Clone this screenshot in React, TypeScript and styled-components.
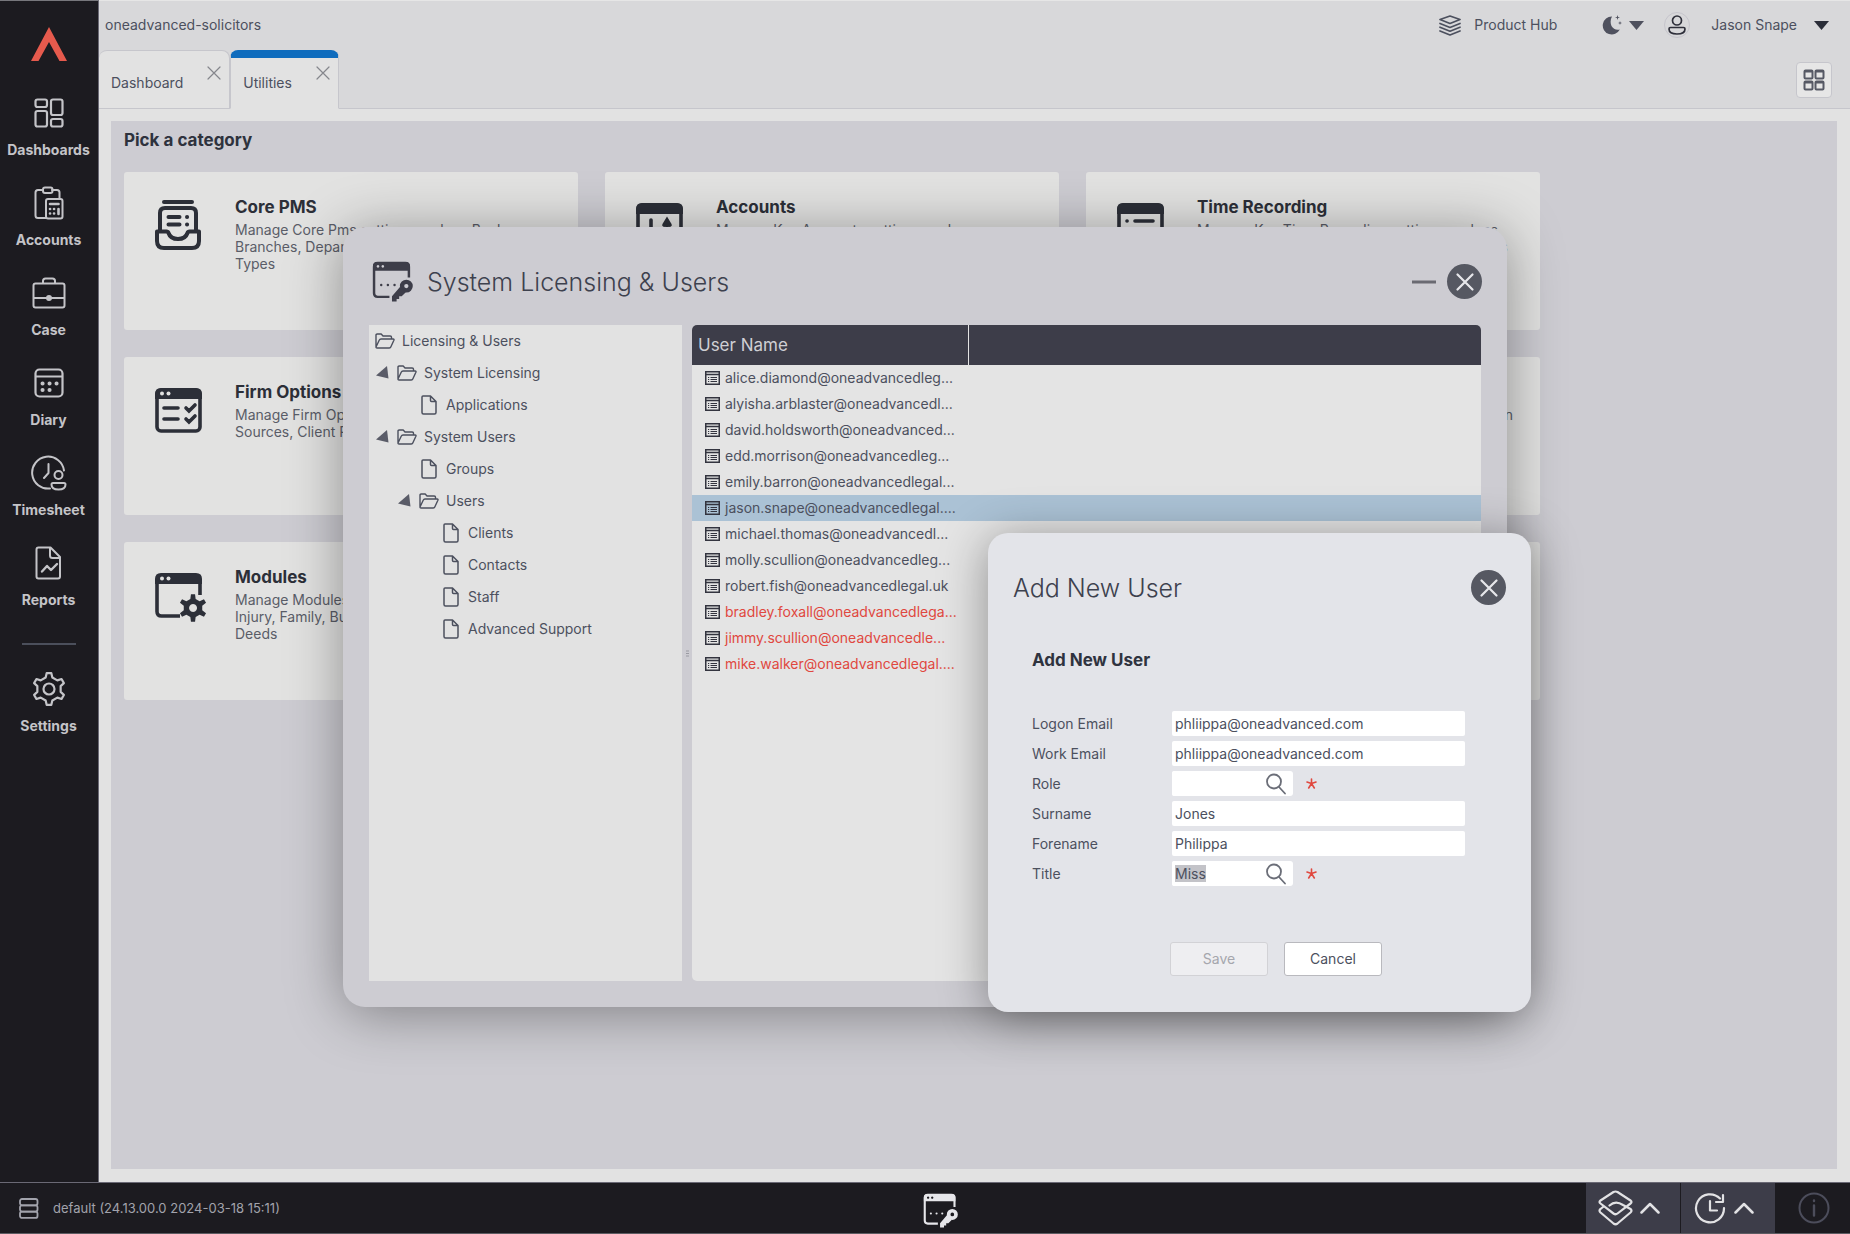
import React, { useEffect, useRef } from 'react';
import styled, { createGlobalStyle } from 'styled-components';

const Global = createGlobalStyle`
  * { box-sizing: border-box; }
  body { margin: 0; background: #1c1b20; }
  body, button, input { font-family: Inter, "Liberation Sans", sans-serif; }
  button { border: 0; padding: 0; background: none; color: inherit; cursor: pointer; }
  h1, h2, h3, p, ul { margin: 0; padding: 0; }
  svg { display: block; flex: none; }
`;

const Shell = styled.div`
  position: relative;
  display: grid;
  grid-template-columns: 99px minmax(0, 1fr);
  grid-template-rows: minmax(0, 1fr) 52px;
  min-height: 100vh;
  color: #4c505e;
  font-size: 14px;
  line-height: 18px;
`;

/* ---------- sidebar ---------- */
const Sidebar = styled.nav`
  display: flex;
  flex-direction: column;
  align-items: center;
  padding: 26px 1px 0 0;
  background: #1c1b20;
  border-top: 1px solid #77777c;
  border-right: 1px solid #6a6975;
  color: #c4c4c8;
`;
const Logo = styled.div`
  height: 56px;
`;
const NavItem = styled.button`
  display: flex;
  flex-direction: column;
  align-items: center;
  justify-content: flex-end;
  gap: 10px;
  width: 100%;
  height: 90px;
  padding-bottom: 14px;
  font-size: 14px;
  line-height: 18px;
  font-weight: 700;
`;
const NavIcon = styled.span`
  display: flex;
  align-items: center;
  height: 36px;
`;
const NavStack = styled.div`
  width: 100%;
`;
const NavRule = styled.hr`
  width: 54px;
  margin: 20px 0 14px;
  border: 0;
  border-top: 2px solid #4b4f5b;
`;

/* ---------- header ---------- */
const Main = styled.div`
  display: flex;
  flex-direction: column;
  min-width: 0;
  background: #e2e2e2;
`;
const Header = styled.header`
  background: #d8d8da;
  border-top: 1px solid #e6e6e6;
`;
const TopBar = styled.div`
  display: flex;
  align-items: center;
  height: 48px;
  padding: 0 21px 0 6px;
`;
const Tenant = styled.span`
  flex: 1;
`;
const TopButton = styled.button<{ $gap: number; $after: number }>`
  display: flex;
  align-items: center;
  gap: ${p => p.$gap}px;
  margin-right: ${p => p.$after}px;
  font-size: 14px;
  line-height: 18px;
`;
const Avatar = styled.span`
  display: grid;
  place-items: center;
  width: 26px;
  height: 26px;
  margin-right: 4px;
  border: 1px solid #c6c5cc;
  border-radius: 50%;
  color: #2e2f3a;
`;
const TabBar = styled.div`
  display: flex;
  align-items: flex-end;
  height: 60px;
  border-bottom: 1px solid #c6c6cc;
  padding-right: 18px;
`;
const Tab = styled.div<{ $active?: boolean }>`
  display: flex;
  gap: 23px;
  height: 59px;
  margin-bottom: -1px;
  padding: ${p => (p.$active ? 7 : 14)}px 7px 0 12px;
  background: #e2e2e2;
  border: 1px solid #c6c6cc;
  border-left-width: ${p => (p.$active ? 1 : 0)}px;
  border-top: ${p => (p.$active ? '8px solid #0f6cbd' : '1px solid #c6c6cc')};
  border-bottom-color: ${p => (p.$active ? '#e2e2e2' : '#c6c6cc')};
  border-radius: 8px 8px 0 0;
`;
const TabLabel = styled.button`
  align-self: flex-start;
  margin-top: 9px;
  font-size: 14px;
  line-height: 18px;
`;
const TabClose = styled.button`
  align-self: flex-start;
  color: #85868c;
`;
const GridButton = styled.button`
  display: grid;
  place-items: center;
  width: 36px;
  height: 36px;
  margin: 0 0 10px auto;
  background: #e6e6e6;
  border: 1px solid #c6c6cc;
  border-radius: 4px;
  color: #565965;
`;

/* ---------- categories ---------- */
const Panel = styled.main`
  flex: 1;
  margin: 12px 13px 13px 12px;
  padding: 9px 13px;
  background: #cdccd2;
`;
const PanelTitle = styled.h1`
  color: #2e323d;
  font-size: 17px;
  line-height: 20px;
  font-weight: 700;
`;
const Cards = styled.div`
  display: grid;
  grid-template-columns: repeat(auto-fill, 454px);
  gap: 27px;
  margin-top: 22px;
`;
const Card = styled.section`
  display: grid;
  grid-template-columns: 80px minmax(0, 1fr);
  align-content: start;
  height: 158px;
  padding: 25px 24px 0 31px;
  background: #e2e2e1;
  border-radius: 3px;
  color: #2c2f38;
`;
const CardIcon = styled.div`
  padding-top: 3px;
`;
const CardTitle = styled.h2`
  font-size: 17px;
  line-height: 20px;
  font-weight: 700;
`;
const CardText = styled.p`
  margin-top: 4px;
  color: #5a5d68;
  font-size: 14px;
  line-height: 17px;
  white-space: pre;
`;

/* ---------- windows ---------- */
const Window = styled.div`
  position: absolute;
  top: 50%;
  left: 50%;
  transform: translate(-50%, -50%);
  display: flex;
  flex-direction: column;
  width: 1164px;
  height: 780px;
  padding: 0 26px 26px;
  background: #cdccd2;
  border-radius: 22px;
  box-shadow: 0 6px 56px rgba(0, 0, 0, 0.38);
`;
const WindowHeader = styled.div`
  display: flex;
  align-items: center;
  height: 98px;
  padding: 11px 0 0 3px;
  color: #3d3d49;
`;
const WindowTitle = styled.h2`
  flex: 1;
  margin-left: 14px;
  color: #3d414e;
  font-size: 25px;
  line-height: 32px;
  font-weight: 300;
`;
const Minimise = styled.button`
  width: 24px;
  height: 24px;
  margin-right: 11px;
  color: #6a6a72;
`;
const RoundClose = styled.button`
  display: grid;
  place-items: center;
  width: 35px;
  height: 35px;
  margin-right: -1px;
  border-radius: 50%;
  background: #565862;
  color: #e6e6ea;
`;
const Split = styled.div`
  flex: 1;
  display: grid;
  grid-template-columns: 313px 10px minmax(0, 1fr);
`;
const Tree = styled.ul`
  list-style: none;
  background: #e2e2e2;
`;
const TreeRow = styled.li<{ $level: number }>`
  display: flex;
  align-items: center;
  height: 32px;
  padding-left: ${p => 6 + Math.max(0, p.$level - 1) * 22}px;
`;
const TreeArrow = styled.button`
  width: 22px;
  height: 20px;
  color: #5a5c68;
`;
const ArrowGap = styled.span`
  width: 22px;
`;
const TreeLink = styled.button`
  display: flex;
  align-items: center;
  gap: 7px;
  font-size: 14px;
  line-height: 18px;
`;
const Grip = styled.div`
  display: grid;
  place-items: center;
  color: #9a9aa2;
`;
const Users = styled.div`
  background: #e4e4e4;
  border-radius: 5px;
  overflow: hidden;
`;
const UserTable = styled.table`
  width: 100%;
  border-collapse: collapse;
  table-layout: fixed;
`;
const Th = styled.th`
  height: 40px;
  padding: 0 6px;
  background: #3d3d49;
  color: #cfcfd4;
  font-size: 17px;
  line-height: 20px;
  font-weight: 400;
  text-align: left;
  &:first-child { width: 276px; border-right: 1px solid #e4e4e4; }
`;
const UserRow = styled.tr<{ $selected?: boolean; $inactive?: boolean }>`
  height: 26px;
  background: ${p => (p.$selected ? '#abc2d5' : 'transparent')};
  color: ${p => (p.$inactive ? '#e0483f' : '#4c505e')};
`;
const UserCell = styled.td`
  padding: 0 0 0 13px;
  font-size: 14px;
  line-height: 18px;
`;
const UserName = styled.span`
  display: flex;
  align-items: center;
  gap: 5px;
  white-space: nowrap;
`;
const RowIcon = styled.span`
  color: #33343f;
`;

/* ---------- add user dialog ---------- */
const Dialog = styled.section`
  position: absolute;
  top: 306px;
  left: 645px;
  width: 543px;
  padding: 37px 26px 36px 25px;
  background: #e3e4e9;
  border-radius: 20px;
  box-shadow: 0 6px 48px rgba(0, 0, 0, 0.38);
`;
const DialogHeader = styled.div`
  display: flex;
  align-items: center;
  & > h2 { margin-left: 0; }
`;
const Form = styled.form`
  padding: 45px 40px 0 19px;
`;
const FormTitle = styled.h3`
  color: #2f333f;
  font-size: 17px;
  line-height: 20px;
  font-weight: 700;
`;
const Fields = styled.div`
  display: grid;
  gap: 5px;
  margin-top: 41px;
`;
const Field = styled.div`
  display: grid;
  grid-template-columns: 140px minmax(0, 1fr);
  align-items: center;
  height: 25px;
`;
const TextBox = styled.input`
  width: 100%;
  height: 25px;
  padding: 0 3px;
  border: 0;
  border-radius: 2px;
  outline: 0;
  background: #fff;
  color: #4c505e;
  font-size: 14px;
  line-height: 18px;
  &::selection { background: #c3c3c8; color: #4c505e; }
`;
const Lookup = styled.div`
  display: flex;
  align-items: center;
`;
const LookupBox = styled.div`
  display: flex;
  align-items: center;
  width: 121px;
  margin-right: 13px;
  padding-right: 6px;
  background: #fff;
  border-radius: 3px;
  color: #6b6e78;
`;
const Required = styled.span`
  display: block;
  color: #e0483f;
`;
const Actions = styled.div`
  display: flex;
  gap: 16px;
  margin: 56px 0 0 138px;
`;
const Action = styled.button`
  width: 98px;
  height: 34px;
  background: #fff;
  border: 1px solid #b9b9be;
  border-radius: 3px;
  font-size: 14px;
  line-height: 18px;
  &:disabled { background: #eeeef1; border-color: #d2d2d6; color: #a5a6ad; }
`;

/* ---------- status bar ---------- */
const StatusBar = styled.footer`
  grid-column: 1 / -1;
  display: grid;
  grid-template-columns: 1fr auto 1fr;
  align-items: center;
  background: #1c1b20;
  border-top: 1px solid #6a6975;
  border-bottom: 1px solid #5c5c62;
  color: #a2a3ac;
  font-size: 13px;
`;
const Build = styled.div`
  display: flex;
  align-items: center;
  gap: 14px;
  padding-left: 19px;
`;
const StatusIcon = styled.button`
  margin-left: 30px;
  padding-top: 4px;
  color: #e6e6ea;
`;
const StatusGroup = styled.div`
  display: flex;
  align-items: stretch;
  justify-content: flex-end;
  height: 50px;
  color: #e2e2e4;
`;
const StatusButton = styled.button`
  display: flex;
  align-items: center;
  gap: 7px;
  width: 94px;
  margin-right: 1px;
  padding-left: 12px;
  background: #3d3d49;
`;
const InfoButton = styled.button`
  display: grid;
  place-items: center;
  width: 74px;
  padding-left: 2px;
  color: #4c4d5b;
`;

/* ---------- icons ---------- */
type IconProps = { w: number; h: number; box?: string; sw?: number; children: React.ReactNode };
const Icon = ({ w, h, box, sw = 2, children }: IconProps) => (
  <svg width={w} height={h} viewBox={box ?? `0 0 ${w} ${h}`} fill="none" stroke="currentColor"
    strokeWidth={sw} strokeLinecap="round" strokeLinejoin="round" aria-hidden="true">
    {children}
  </svg>
);
const Cross = ({ size, sw }: { size: number; sw: number }) => (
  <Icon w={size} h={size} box="0 0 16 16" sw={sw}><path d="M2 2 14 14M14 2 2 14" /></Icon>
);
const Caret = ({ color }: { color: string }) => (
  <svg width="15" height="9" viewBox="0 0 15 9" fill={color} aria-hidden="true"><path d="M0 0h15L7.500 9z" /></svg>
);
const Search = () => (
  <Icon w={22} h={22} sw={1.8}><circle cx="9" cy="8.500" r="7" /><path d="M14 14 20 20.500" /></Icon>
);
const Folder = () => (
  <Icon w={20} h={16} sw={1.4}>
    <path d="M1 13.500V2.200Q1 1 2.200 1h4l1.800 2h7.200q1.300 0 1.300 1.300V6M1 14 4.200 7.200Q4.800 6 6 6h12.200q1.200 0 .700 1.200l-3 6.600q-.400 1.200-1.600 1.200H2Q1 15 1 14z" />
  </Icon>
);
const File = () => (
  <Icon w={20} h={20} sw={1.5}>
    <path d="M4 1h7.500L17 6.500V17.500Q17 19 15.500 19h-11Q3 19 3 17.500V2Q3 1 4 1zM11.500 1v4.500q0 1 1 1H17" />
  </Icon>
);
const RecordIcon = () => (
  <svg width="15" height="14" viewBox="0 0 15 14" fill="none" stroke="currentColor" aria-hidden="true">
    <rect x=".75" y=".75" width="13.500" height="12.500" strokeWidth="1.500" />
    <path d="M1 3.500h13" strokeWidth="1.500" />
    <path d="M3 6.500h1.200M3 8.500h1.200M3 10.500h1.200M5.500 6.500H12M5.500 8.500H12M5.500 10.500H12" strokeWidth="1.100" />
  </svg>
);
const KeyWindow = ({ size }: { size: number }) => (
  <svg width={size} height={size} viewBox="0 0 40 40" fill="none" aria-hidden="true">
    <path d="M17 35H5.500Q2 35 2 31.500V5.500Q2 2 5.500 2h27Q36 2 36 5.500V16" stroke="currentColor" strokeWidth="2.400" />
    <path fillRule="evenodd" fill="currentColor" d="M5 1h28q4 0 4 4v4.500H1V5q0-4 4-4zM5.800 4a1.300 1.300 0 1 0 .1 0zM10.500 4a1.300 1.300 0 1 0 .1 0z" />
    <g fill="currentColor"><circle cx="9" cy="23.500" r="1.200" /><circle cx="15.500" cy="23.500" r="1.200" /><circle cx="22" cy="23.500" r="1.200" /></g>
    <circle cx="33.500" cy="24.500" r="4.200" stroke="currentColor" strokeWidth="4.200" />
    <path fill="currentColor" d="M27.500 25 19.500 34.500V39.500H24V37H26.500V34.500H29L33 30.500z" />
  </svg>
);
const WindowFrame = ({ cut, dots = true, children }: { cut?: boolean; dots?: boolean; children: React.ReactNode }) => (
  <svg width="52" height="53" viewBox="0 -3 52 53" fill="none" stroke="currentColor" strokeWidth="3.600" strokeLinecap="round" aria-hidden="true">
    {cut
      ? <path strokeLinecap="butt" d="M25 43H6.500Q2 43 2 38.500V6.500M45 8v14" />
      : <rect x="2" y="2" width="43" height="41" rx="4" />}
    <path stroke="none" fill="currentColor" d="M6 0h35q6 0 6 6v5H0V6q0-6 6-6z" />
    {dots && <g stroke="none" fill="#e2e2e1"><circle cx="7" cy="5.500" r="2" /><circle cx="13.500" cy="5.500" r="2" /></g>}
    {children}
  </svg>
);
const gearPath = (cx: number, cy: number, inner: number, outer: number, teeth: number) => {
  const pts: string[] = [];
  const step = (Math.PI * 2) / teeth;
  for (let i = 0; i < teeth; i++) {
    const a = i * step - Math.PI / 2;
    [[-0.27, inner], [-0.14, outer], [0.14, outer], [0.27, inner]].forEach(([o, r]) => {
      pts.push(`${(cx + Math.cos(a + o * step) * r).toFixed(2)} ${(cy + Math.sin(a + o * step) * r).toFixed(2)}`);
    });
  }
  return `M${pts.join('L')}z`;
};

const icons = {
  dashboards: <Icon w={30} h={30} sw={2.2}>
    <rect x="1.500" y="1.500" width="11.500" height="7.500" rx="2" /><rect x="1.500" y="13" width="11.500" height="15.500" rx="2" />
    <rect x="17" y="1.500" width="11.500" height="15.500" rx="2" /><rect x="17" y="21" width="11.500" height="7.500" rx="2" />
  </Icon>,
  accounts: <Icon w={30} h={34} sw={2}>
    <path d="M9 4H4Q1.500 4 1.500 6.500v23Q1.500 32 4 32h8M18 4h5q2.500 0 2.500 2.500V12" />
    <rect x="9" y="1.500" width="9.500" height="5.500" rx="2" /><rect x="12" y="13" width="16.500" height="19.500" rx="2" />
    <path d="M16 18h8.500M16 23h.1M20 23h.1M24.500 23v5M16 27.500h.1M20 27.500h.1" strokeWidth="2.600" />
  </Icon>,
  case: <Icon w={34} h={32} sw={2}>
    <rect x="1.500" y="6.500" width="31" height="24" rx="2" /><path d="M11 6V4q0-2.500 2.500-2.500h7Q23 1.500 23 4v2M2 21h30" />
    <circle cx="17" cy="21" r="2" fill="currentColor" />
  </Icon>,
  diary: <Icon w={30} h={30} sw={2.2}>
    <rect x="1.500" y="1.500" width="27" height="27" rx="4" /><path d="M2 8.500h26" />
    <path d="M8.500 15.500h.1M15.500 15.500h.1M22.500 15.500h.1M8.500 22h.1M15.500 22h.1" strokeWidth="4" />
  </Icon>,
  timesheet: <Icon w={36} h={36} sw={2}>
    <path d="M19 33.500A16 16 0 1 1 33 15.500M17.500 9v9l-4.500 5" />
    <circle cx="27.500" cy="20" r="4" /><path d="M22 28h11q1.500 0 1.500 1.500 0 5-7 5t-7-5Q20.500 28 22 28z" />
  </Icon>,
  reports: <Icon w={28} h={34} sw={2}>
    <path d="M3.500 1.500h12l9.500 9.500v19.500q0 2-2 2H3.500q-2 0-2-2v-27q0-2 2-2zM15 2v7.500q0 2.500 2.500 2.500H25" />
    <path d="M7 25.500l5-5.500 4 4 6-6" strokeWidth="2.400" />
  </Icon>,
  settings: <Icon w={34} h={34} sw={2.2}>
    <path d={gearPath(17, 17, 12, 16, 6)} /><circle cx="17" cy="17" r="5.500" />
  </Icon>,
  core: <svg width="46" height="50" viewBox="0 0 46 50" fill="none" stroke="currentColor" strokeWidth="4" strokeLinecap="round" strokeLinejoin="round" aria-hidden="true">
    <path d="M9 2h28M5 30V13q0-5 5-5h26q5 0 5 5v17" />
    <path d="M13.500 17h11M13.500 24.500h11M32 17h.1M32 24.500h.1" />
    <path d="M2 31.500V41q0 7 7 7h28q7 0 7-7v-9.500h-9.500q-1.500 0-2 1.500-2 6-9.500 6t-9.500-6q-.5-1.500-2-1.500z" />
  </svg>,
  accountsCard: <WindowFrame dots={false}><path d="M15 17v19M31 17v19M28 22l3-5 3 5M12 30h6" /></WindowFrame>,
  time: <WindowFrame dots={false}><path d="M10 18h.1M18 18h18M10 28h.1M18 28h8" /><circle cx="36" cy="34" r="8" /></WindowFrame>,
  firm: <WindowFrame><path d="M9 20h14M9 31h14M31 20l3 3 6-6M31 31l3 3 6-6" /></WindowFrame>,
  modules: <WindowFrame cut>
    <path stroke="none" fill="currentColor" fillRule="evenodd" d={`${gearPath(38, 35, 9.5, 14, 6)}M38 31a4 4 0 1 0 .1 0z`} />
  </WindowFrame>,
};

/* ---------- data ---------- */
const nav = [
  ['Dashboards', icons.dashboards], ['Accounts', icons.accounts], ['Case', icons.case],
  ['Diary', icons.diary], ['Timesheet', icons.timesheet], ['Reports', icons.reports],
] as const;

const cards = [
  { title: 'Core PMS', icon: icons.core, text: 'Manage Core Pms settings such as Bank,\nBranches, Departments, Work\nTypes' },
  { title: 'Accounts', icon: icons.accountsCard, text: 'Manage Key Accounts settings such' },
  { title: 'Time Recording', icon: icons.time, text: 'Manage Key Time Recording settings such as\nCharge Rates, Time Codes and Activity Groups' },
  { title: 'Firm Options', icon: icons.firm, text: 'Manage Firm Options such as\nSources, Client Ratings' },
  { title: '', icon: null, text: '' },
  { title: 'Integration', icon: null, text: 'Manage the options used for system integration' },
  { title: 'Modules', icon: icons.modules, text: 'Manage Modules such as Personal\nInjury, Family, Bulk Scanning and\nDeeds' },
  { title: '', icon: null, text: '' },
  { title: '', icon: null, text: '' },
];

type Node = { label: string; level: number; kind: 'root' | 'folder' | 'file' };
const tree: Node[] = [
  { label: 'Licensing & Users', level: 0, kind: 'root' },
  { label: 'System Licensing', level: 1, kind: 'folder' },
  { label: 'Applications', level: 2, kind: 'file' },
  { label: 'System Users', level: 1, kind: 'folder' },
  { label: 'Groups', level: 2, kind: 'file' },
  { label: 'Users', level: 2, kind: 'folder' },
  { label: 'Clients', level: 3, kind: 'file' },
  { label: 'Contacts', level: 3, kind: 'file' },
  { label: 'Staff', level: 3, kind: 'file' },
  { label: 'Advanced Support', level: 3, kind: 'file' },
];

const users = [
  { name: 'alice.diamond@oneadvancedleg...' },
  { name: 'alyisha.arblaster@oneadvancedl...' },
  { name: 'david.holdsworth@oneadvanced...' },
  { name: 'edd.morrison@oneadvancedleg...' },
  { name: 'emily.barron@oneadvancedlegal...' },
  { name: 'jason.snape@oneadvancedlegal....', selected: true },
  { name: 'michael.thomas@oneadvancedl...' },
  { name: 'molly.scullion@oneadvancedleg...' },
  { name: 'robert.fish@oneadvancedlegal.uk' },
  { name: 'bradley.foxall@oneadvancedlega...', inactive: true },
  { name: 'jimmy.scullion@oneadvancedle...', inactive: true },
  { name: 'mike.walker@oneadvancedlegal....', inactive: true },
];

const fields = [
  { id: 'logon', label: 'Logon Email', value: 'phliippa@oneadvanced.com' },
  { id: 'work', label: 'Work Email', value: 'phliippa@oneadvanced.com' },
  { id: 'role', label: 'Role', value: '', lookup: true },
  { id: 'surname', label: 'Surname', value: 'Jones' },
  { id: 'forename', label: 'Forename', value: 'Philippa' },
  { id: 'title', label: 'Title', value: 'Miss', lookup: true },
];

const AddUserDialog = () => {
  const titleRef = useRef<HTMLInputElement>(null);
  useEffect(() => {
    titleRef.current?.focus({ preventScroll: true });
    titleRef.current?.select();
  }, []);
  return (
    <Dialog role="dialog" aria-label="Add New User">
      <DialogHeader>
        <WindowTitle>Add New User</WindowTitle>
        <RoundClose aria-label="Close dialog"><Cross size={20} sw={1.8} /></RoundClose>
      </DialogHeader>
      <Form onSubmit={e => e.preventDefault()}>
        <FormTitle>Add New User</FormTitle>
        <Fields>
          {fields.map(f => (
            <Field key={f.id}>
              <label htmlFor={f.id}>{f.label}</label>
              {f.lookup ? (
                <Lookup>
                  <LookupBox>
                    <TextBox id={f.id} defaultValue={f.value} required ref={f.id === 'title' ? titleRef : undefined} />
                    <button type="button" aria-label={`Search ${f.label}`}><Search /></button>
                  </LookupBox>
                  <Required>
                    <Icon w={11} h={11} sw={1.6}><path d="M5.500 1v4.500M1 4l4.500 1.500L10 4M5.500 5.500 2.700 10M5.500 5.500 8.300 10" /></Icon>
                  </Required>
                </Lookup>
              ) : <TextBox id={f.id} defaultValue={f.value} />}
            </Field>
          ))}
        </Fields>
        <Actions>
          <Action type="submit" disabled>Save</Action>
          <Action type="button">Cancel</Action>
        </Actions>
      </Form>
    </Dialog>
  );
};

const LicensingWindow = () => (
  <Window role="dialog" aria-label="System Licensing & Users">
    <WindowHeader>
      <KeyWindow size={41} />
      <WindowTitle>System Licensing &amp; Users</WindowTitle>
      <Minimise aria-label="Minimise"><Icon w={24} h={24} sw={3}><path strokeLinecap="butt" d="M0 12h24" /></Icon></Minimise>
      <RoundClose aria-label="Close window"><Cross size={20} sw={1.8} /></RoundClose>
    </WindowHeader>
    <Split>
      <Tree>
        {tree.map(n => (
          <TreeRow key={n.label} $level={n.level}>
            {n.kind === 'folder' && (
              <TreeArrow aria-label={`Collapse ${n.label}`}>
                <svg width="14" height="14" viewBox="0 0 14 14" fill="currentColor" aria-hidden="true"><path d="M12 0 1 9.500 13.500 12.500z" /></svg>
              </TreeArrow>
            )}
            {n.kind === 'file' && <ArrowGap />}
            <TreeLink>{n.kind === 'file' ? <File /> : <Folder />}{n.label}</TreeLink>
          </TreeRow>
        ))}
      </Tree>
      <Grip><Icon w={3} h={7} sw={1}><path d="M0 1h3M0 3.500h3M0 6h3" /></Icon></Grip>
      <Users>
        <UserTable>
          <thead><tr><Th scope="col">User Name</Th><Th /></tr></thead>
          <tbody>
            {users.map(u => (
              <UserRow key={u.name} $selected={u.selected} $inactive={u.inactive}>
                <UserCell><UserName><RowIcon><RecordIcon /></RowIcon>{u.name}</UserName></UserCell>
                <UserCell />
              </UserRow>
            ))}
          </tbody>
        </UserTable>
      </Users>
    </Split>
    <AddUserDialog />
  </Window>
);

export default function App() {
  return (
    <>
      <Global />
      <Shell>
        <Sidebar aria-label="Main">
          <Logo>
            <svg width="36" height="34" viewBox="0 0 36 34" fill="#e65a4d" aria-hidden="true"><path d="M18 0 36 34H28.500L18 15 7.500 34H0z" /></svg>
          </Logo>
          <NavStack>
            {nav.map(([label, icon]) => (
              <NavItem key={label}><NavIcon>{icon}</NavIcon>{label}</NavItem>
            ))}
          </NavStack>
          <NavRule />
          <NavItem><NavIcon>{icons.settings}</NavIcon>Settings</NavItem>
        </Sidebar>

        <Main>
          <Header>
            <TopBar>
              <Tenant>oneadvanced-solicitors</Tenant>
              <TopButton $gap={13} $after={45}>
                <Icon w={22} h={21} sw={1.7}>
                  <path d="M11 1 21 4.500 11 8.500 1 4.500zM1 8.500l10 4 10-4M1 12.200l10 4 10-4M1 16l10 4 10-4" />
                </Icon>
                Product Hub
              </TopButton>
              <TopButton $gap={7} $after={20} aria-label="Theme">
                <svg width="20" height="20" viewBox="0 0 20 20" fill="#4f515e" aria-hidden="true">
                  <path d="M10 1.500A9 9 0 1 0 17.800 14.500Q12 15.500 9.500 11 7.500 6 10 1.500zM15.500 0l.6 1.900 1.900.6-1.900.6-.6 1.900-.6-1.900-1.900-.6 1.900-.6zM18 6l.5 1.500L20 8l-1.500.5L18 10l-.5-1.500L16 8l1.500-.5z" />
                </svg>
                <Caret color="#4f515e" />
              </TopButton>
              <TopButton $gap={17} $after={0}>
                <Avatar>
                  <Icon w={18} h={20} sw={1.7}><circle cx="9" cy="5.500" r="4.500" /><path d="M2.500 12.500h13q1.500 0 1.500 1.500 0 5-8 5t-8-5q0-1.500 1.500-1.500z" /></Icon>
                </Avatar>
                Jason Snape
                <Caret color="#2a2d38" />
              </TopButton>
            </TopBar>
            <TabBar>
              <Tab><TabLabel>Dashboard</TabLabel><TabClose aria-label="Close Dashboard"><Cross size={16} sw={1.2} /></TabClose></Tab>
              <Tab $active><TabLabel>Utilities</TabLabel><TabClose aria-label="Close Utilities"><Cross size={16} sw={1.2} /></TabClose></Tab>
              <GridButton aria-label="Tile windows">
                <Icon w={22} h={22} sw={2}>
                  <rect x="1.500" y="1.500" width="8" height="8" rx="1" /><rect x="12.500" y="1.500" width="8" height="8" rx="1" />
                  <rect x="1.500" y="12.500" width="8" height="8" rx="1" /><rect x="12.500" y="12.500" width="8" height="8" rx="1" />
                  <path d="M2 2.500h7M13 2.500h7M2 13.500h7M13 13.500h7" />
                </Icon>
              </GridButton>
            </TabBar>
          </Header>

          <Panel>
            <PanelTitle>Pick a category</PanelTitle>
            <Cards>
              {cards.map((c, i) => (
                <Card key={i}>
                  <CardIcon>{c.icon}</CardIcon>
                  <div>{c.title && <CardTitle>{c.title}</CardTitle>}<CardText>{c.text}</CardText></div>
                </Card>
              ))}
            </Cards>
          </Panel>
        </Main>

        <StatusBar>
          <Build>
            <Icon w={20} h={21} sw={1.8}><rect x="1" y="1" width="17.500" height="6.300" rx="2" /><rect x="1" y="7.300" width="17.500" height="6.300" rx="2" /><rect x="1" y="13.600" width="17.500" height="6.300" rx="2" /></Icon>
            default (24.13.00.0 2024-03-18 15:11)
          </Build>
          <StatusIcon aria-label="System Licensing & Users"><KeyWindow size={35} /></StatusIcon>
          <StatusGroup>
            <StatusButton aria-label="Layers">
              <Icon w={35} h={36} sw={2.2}>
                <path d="M15.500 2Q17.500 1 19.500 2l13 8.500q2 1.500 0 3l-13 10q-2 1.500-4 0l-13-10q-2-1.500 0-3zM5 17l-2.500 2q-2 1.500 0 3.500l13 11q2 1.500 4 0l13-11q2-2 0-3.500L25 15Q17.500 10 11.500 15.500" />
              </Icon>
              <Icon w={20} h={12} sw={2.5}><path d="M1.500 10.500 10 2l8.500 8.500" /></Icon>
            </StatusButton>
            <StatusButton aria-label="Recent">
              <Icon w={34} h={32} sw={2.2}>
                <path d="M31 16A14 14 0 1 1 27 6.500M30 3v7h-7M17 9v9.500h7" />
              </Icon>
              <Icon w={20} h={12} sw={2.5}><path d="M1.500 10.500 10 2l8.500 8.500" /></Icon>
            </StatusButton>
            <InfoButton aria-label="About">
              <Icon w={32} h={32} sw={2}><circle cx="16" cy="16" r="14.500" /><path d="M16 13.500v10M16 8.500v.5" strokeWidth="2.400" /></Icon>
            </InfoButton>
          </StatusGroup>
        </StatusBar>
        <LicensingWindow />
      </Shell>
    </>
  );
}
